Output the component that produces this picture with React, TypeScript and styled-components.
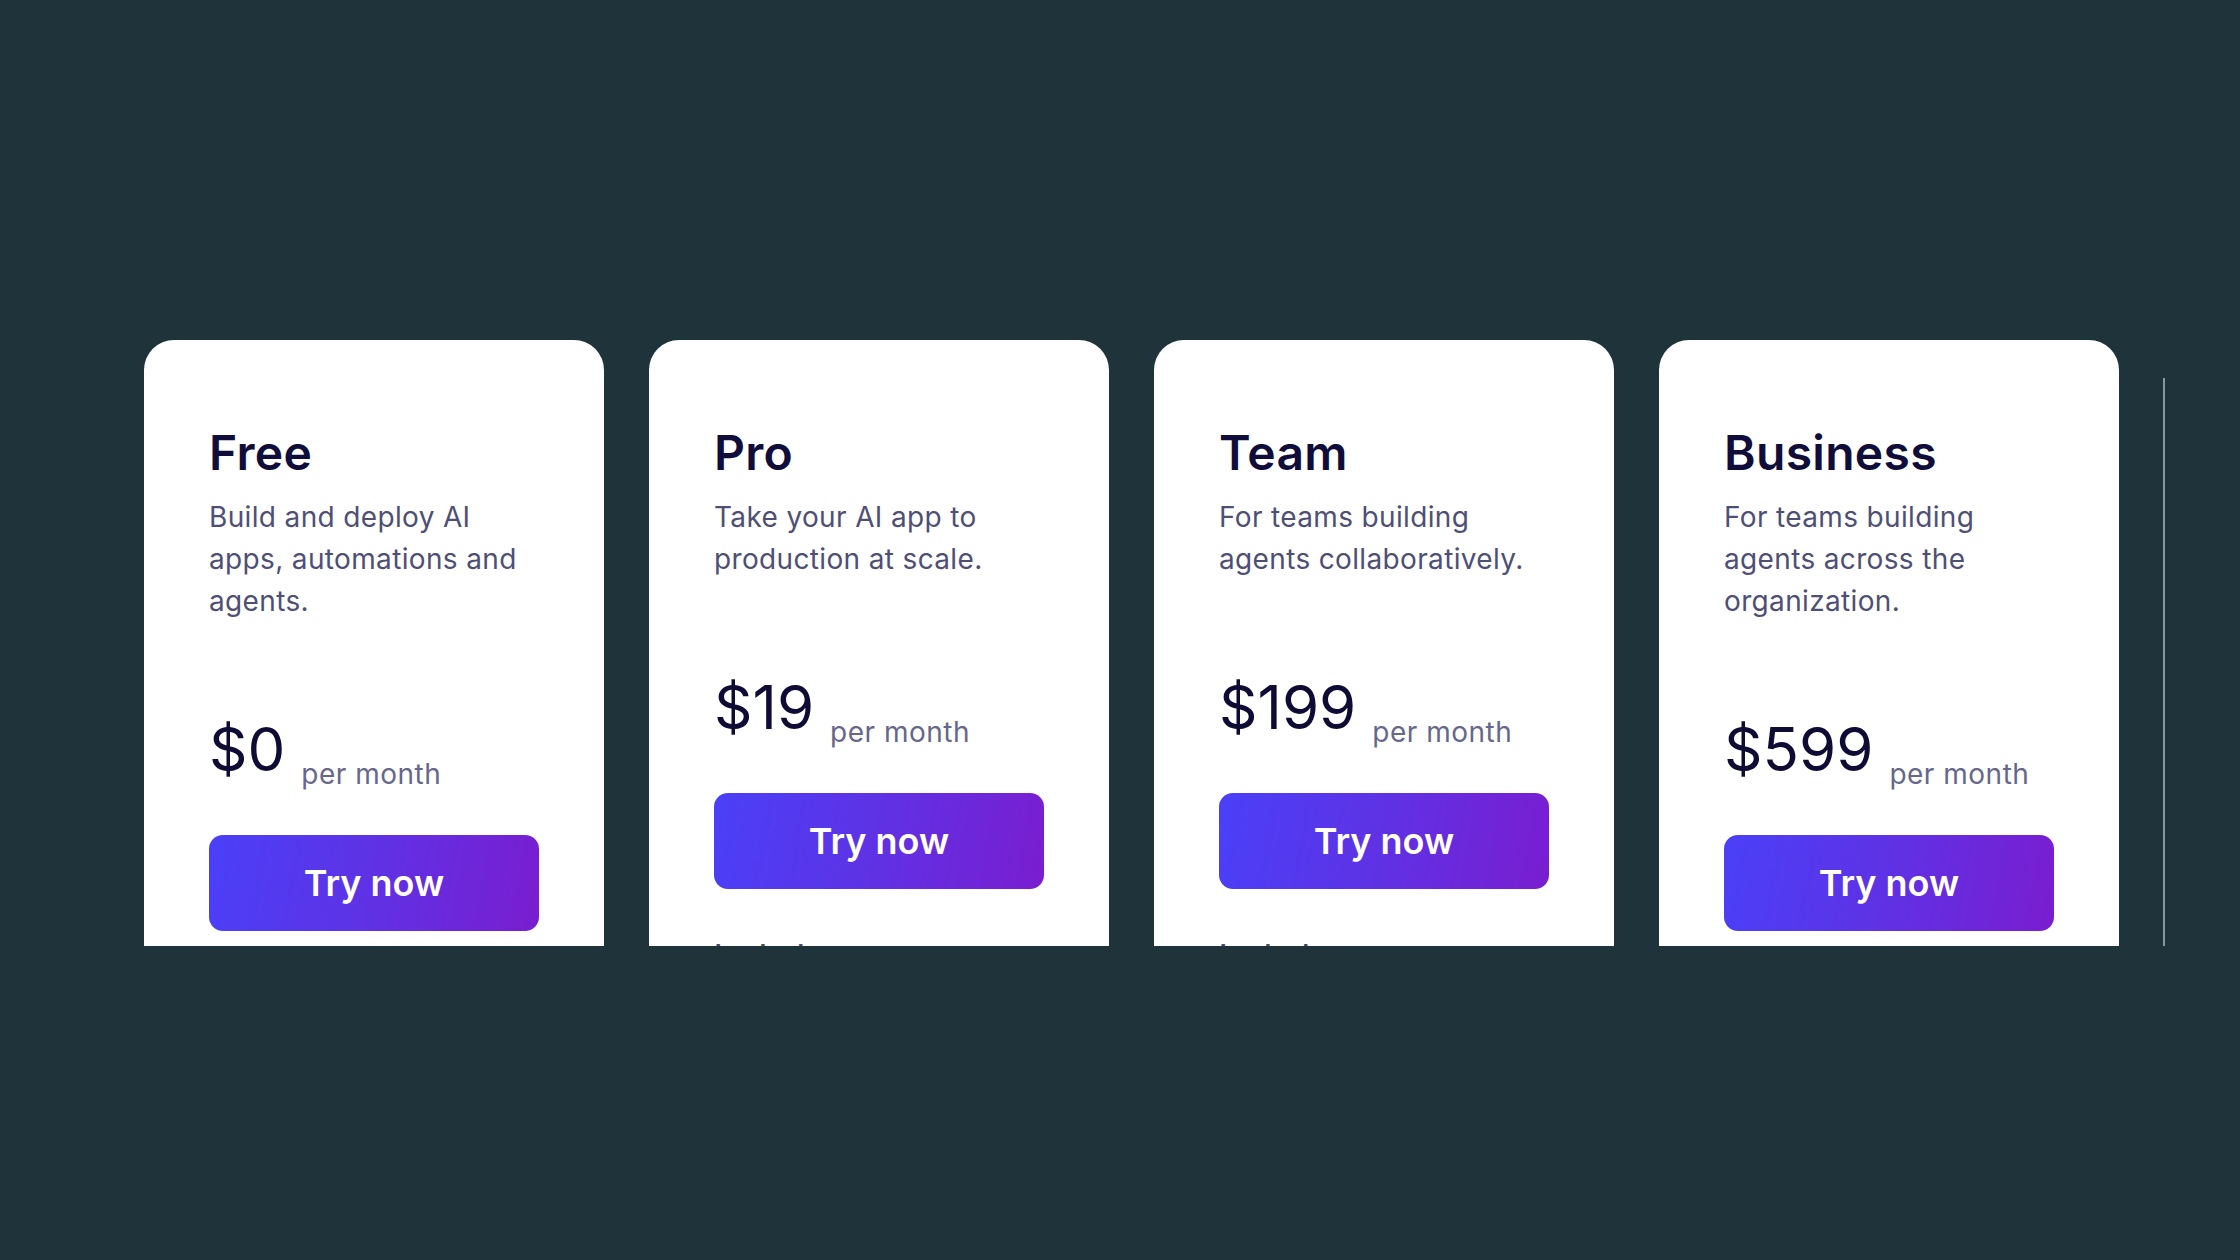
import React from "react";
import styled, { createGlobalStyle } from "styled-components";

const GlobalStyle = createGlobalStyle`
  html, body {
    margin: 0;
    padding: 0;
    background: #1f333b;
  }
  body {
    font-family: Inter, "Noto Sans", "Liberation Sans", sans-serif;
    -webkit-font-smoothing: antialiased;
  }
  * { box-sizing: border-box; }
`;

const Page = styled.main`
  width: 2240px;
  height: 1260px;
  background: #1f333b;
  padding: 340px 0 0 144px;
  overflow: hidden;
`;

const Track = styled.section`
  display: flex;
  align-items: flex-start;
  gap: 45px;
  height: 606px;
  overflow: hidden;
`;

const Card = styled.article`
  flex: 0 0 460px;
  width: 460px;
  background: #ffffff;
  border-radius: 30px 30px 0 0;
  padding: 84px 65px 60px;
  display: flex;
  flex-direction: column;
`;

const PlanName = styled.h2`
  margin: 0;
  font-size: 48px;
  line-height: 1.2;
  font-weight: 600;
  color: #100d3b;
  letter-spacing: 0.3px;
`;

const Description = styled.p`
  margin: 14px 0 0;
  font-size: 28px;
  line-height: 42px;
  font-weight: 400;
  color: #4f4f76;
  letter-spacing: 0.35px;
`;

const PriceRow = styled.div`
  margin-top: 91px;
  display: flex;
  align-items: flex-end;
  gap: 16px;
`;

const Amount = styled.span`
  font-size: 60px;
  line-height: 1.2;
  font-weight: 400;
  color: #0e0c34;
  margin-bottom: 7px;
`;

const Period = styled.span`
  font-size: 28px;
  line-height: 1.2;
  color: #67678c;
  letter-spacing: 0.5px;
`;

const TryButton = styled.button`
  margin-top: 43px;
  width: 100%;
  height: 96px;
  border: none;
  border-radius: 14px;
  background: linear-gradient(100deg, #4a40f8 0%, #5d33e6 45%, #7a1dd0 100%);
  color: #ffffff;
  font-family: inherit;
  font-size: 36px;
  font-weight: 600;
  cursor: pointer;
`;

const FeatureHeading = styled.p`
  margin: 46px 0 0;
  font-size: 31px;
  line-height: 42px;
  font-weight: 500;
  color: #4a4a66;
`;

const Divider = styled.div`
  flex: 0 0 2px;
  align-self: stretch;
  margin-top: 38px;
  margin-left: -1px;
  background: #8597a0;
`;

type Plan = {
  name: string;
  description: string;
  price: string;
};

const plans: Plan[] = [
  {
    name: "Free",
    description: "Build and deploy AI apps, automations and agents.",
    price: "$0",
  },
  {
    name: "Pro",
    description: "Take your AI app to production at scale.",
    price: "$19",
  },
  {
    name: "Team",
    description: "For teams building agents collaboratively.",
    price: "$199",
  },
  {
    name: "Business",
    description: "For teams building agents across the organization.",
    price: "$599",
  },
];

export default function App() {
  return (
    <>
      <GlobalStyle />
      <Page>
        <Track>
          {plans.map((p) => (
            <Card key={p.name}>
              <PlanName>{p.name}</PlanName>
              <Description>{p.description}</Description>
              <PriceRow>
                <Amount>{p.price}</Amount>
                <Period>per month</Period>
              </PriceRow>
              <TryButton>Try now</TryButton>
              <FeatureHeading>Includes</FeatureHeading>
            </Card>
          ))}
          <Divider />
        </Track>
      </Page>
    </>
  );
}
